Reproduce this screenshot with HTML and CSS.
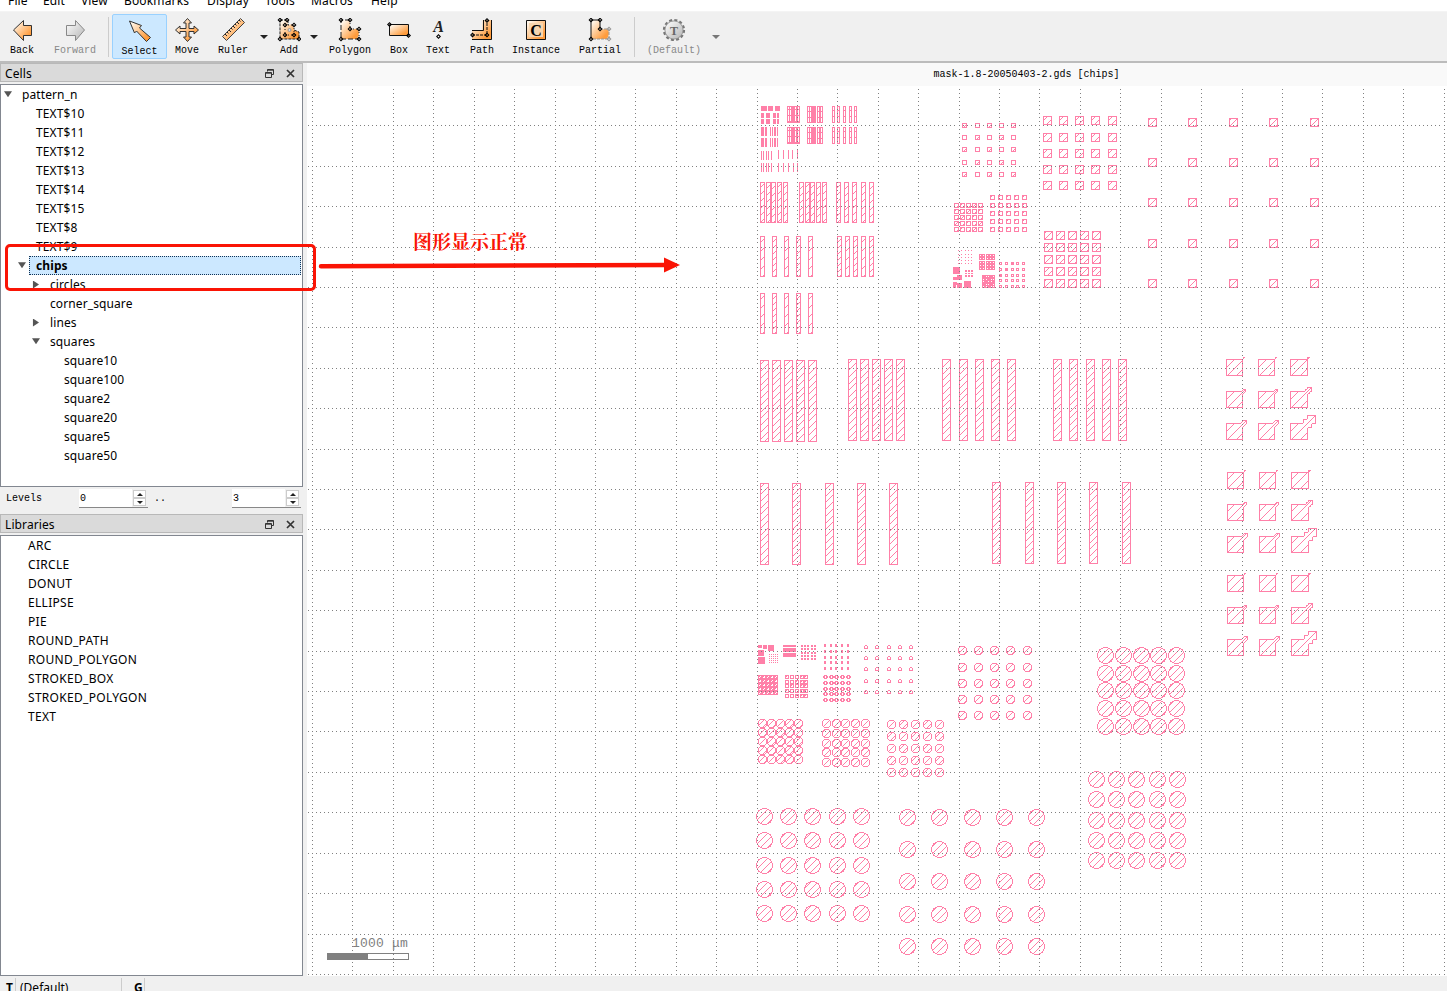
FILE: index.html
```
<!DOCTYPE html>
<html lang="en">
<head>
<meta charset="utf-8">
<title>mask-1.8-20050403-2.gds [chips]</title>
<link rel="stylesheet" href="styles.css">
</head>
<body>
<svg width="0" height="0" class="defs">
  <defs>
    <linearGradient id="og" x1="0" y1="0" x2="1" y2="1"><stop offset=".1" stop-color="#fff6ea"/><stop offset=".8" stop-color="#ff9c3c"/></linearGradient>
    <linearGradient id="gg" x1="0" y1="0" x2="1" y2="1"><stop offset="0" stop-color="#fff"/><stop offset="1" stop-color="#b4b4b4"/></linearGradient>
    <path id="nd" d="M0-2.5 2.5 0 0 2.5-2.5 0z M0-1-1 0 0 1 1 0z" fill-rule="evenodd"/>
    <symbol id="float" viewBox="0 0 9 9"><path d="M2.5 2.5V.5h6v5h-2M.5 3.5h6v5h-6zM.5 4.2h6M2.5 1.2h6" fill="none" stroke="#333"/></symbol>
    <symbol id="close" viewBox="0 0 9 9"><path d="M1 1l7 7M8 1L1 8" fill="none" stroke="#333" stroke-width="1.7"/></symbol>
  </defs>
</svg>
<nav class="menu"><span class="m1">File</span><span class="m2">Edit</span><span class="m3">View</span><span class="m4">Bookmarks</span><span class="m5">Display</span><span class="m6">Tools</span><span class="m7">Macros</span><span>Help</span></nav>
<div class="toolbar">
  <div class="tool w44"><svg viewBox="0 0 24 24"><path d="M3.500 12 13.500 2.500v5h8v10h-8v5z" fill="url(#og)" stroke="#333"/></svg>Back</div>
  <div class="tool w62 off"><svg viewBox="0 0 24 24"><path d="M21.500 12 12.500 2.500v5h-9v10h9v5z" fill="url(#gg)" stroke="#888"/></svg>Forward</div>
  <div class="sep"></div>
  <div class="tool w55 on"><svg viewBox="0 0 24 24"><path d="M1.500 2 13.500 6.500 11.500 9 22.500 18.500 18.500 22.500 8.500 12 6.500 14z" fill="url(#og)" stroke="#333"/></svg>Select</div>
  <div class="tool w40"><svg viewBox="0 0 24 24"><path d="M12.500 .5l4 4.500h-2.500V10.500H19V8l4.500 4-4.500 4v-2.500h-5V19h2.500l-4 4.500L8.500 19h2.500v-5.500H5V16L.5 12 5 8v2.500h6V5H8.500z" fill="url(#og)" stroke="#333"/></svg>Move</div>
  <div class="tool w52"><svg viewBox="0 0 24 24"><path d="M19.500 .5l4 4-18 18-4-4z" fill="url(#og)" stroke="#444"/><path d="M4 16l2 2m0-4 1.500 1.500M8 12l2 2m0-4 1.500 1.500M12 8l2 2m0-4 1.500 1.500M16 4l2 2m0-4 1.500 1.500" stroke="#222"/></svg>Ruler</div>
  <div class="drop w10"></div>
  <div class="tool w40"><svg viewBox="0 0 24 24"><path d="M3 2h8v5l5-1 1 6 5 2v7H3z" fill="url(#og)"/><path d="M3 2h8v5M17 12l5 2v7H3V2" fill="none" stroke="#222" stroke-dasharray="3 1"/><path d="M8 7h9v10H8z" fill="none" stroke="#222" stroke-dasharray="1 2"/><use href="#nd" x="3" y="2"/><use href="#nd" x="10" y="2"/><use href="#nd" x="3" y="21"/><use href="#nd" x="22" y="21"/><use href="#nd" x="8" y="7"/><use href="#nd" x="17" y="7"/><use href="#nd" x="8" y="17"/><use href="#nd" x="17" y="17"/><circle cx="12.500" cy="12" r="1.500" fill="#ddd" stroke="#999"/></svg>Add</div>
  <div class="drop w9"></div>
  <div class="tool w64"><svg viewBox="0 0 24 24"><path d="M3 2h9v9c2 2 4-1 7 0 3 3 2 6 0 10H3z" fill="url(#og)"/><path d="M12 2H3v19h18" fill="none" stroke="#222" stroke-dasharray="5 2"/><path d="M12 2v9h9v10" fill="none" stroke="#222" stroke-dasharray="1 2"/><use href="#nd" x="3" y="2"/><use href="#nd" x="12" y="2"/><use href="#nd" x="12" y="11"/><use href="#nd" x="21" y="11"/><use href="#nd" x="3" y="21"/><use href="#nd" x="21" y="21"/></svg>Polygon</div>
  <div class="tool w34"><svg viewBox="0 0 24 24"><path d="M2.500 6.500h19v11h-19z" fill="url(#og)" stroke="#111"/><use href="#nd" x="2.500" y="6.500"/><use href="#nd" x="21.500" y="17.500"/></svg>Box</div>
  <div class="tool w44"><svg viewBox="0 0 24 24"><text x="12.500" y="13.500" class="ia">A</text><use href="#nd" x="12.500" y="18.500"/></svg>Text</div>
  <div class="tool w44"><svg viewBox="0 0 24 24"><path d="M12.500 2v11H2v8.500h19.500V2z" fill="url(#og)"/><path d="M13.500 2v10.500H2M2 21.500h19.500V2" fill="none" stroke="#111"/><path d="M2 17h15V2" fill="none" stroke="#111" stroke-dasharray="3 1"/><use href="#nd" x="2.500" y="17"/><use href="#nd" x="17" y="17"/><use href="#nd" x="17" y="2.500"/></svg>Path</div>
  <div class="tool w64"><svg viewBox="0 0 24 24"><path d="M2.500 2.500h19v19h-19z" fill="url(#og)" stroke="#111"/><path d="M5 5h14v14H5z" fill="#f7d5ae"/><text x="12" y="17.500" class="ic">C</text></svg>Instance</div>
  <div class="tool w64"><svg viewBox="0 0 24 24"><path d="M3 2h9v9c2 2 4-1 7 0 3 3 2 6 0 10H3z" fill="url(#og)"/><path d="M12 11V2H3v19" fill="none" stroke="#111"/><path d="M12 11h9v10H3" fill="none" stroke="#999" stroke-dasharray="3 1"/><use href="#nd" x="3" y="2"/><use href="#nd" x="12" y="2"/><use href="#nd" x="12" y="11"/><use href="#nd" x="3" y="21"/><g fill="#999"><use href="#nd" x="21" y="11"/><use href="#nd" x="21" y="21"/></g></svg>Partial</div>
  <div class="sep"></div>
  <div class="tool w72 off"><svg viewBox="0 0 24 24"><circle cx="12" cy="12" r="10" fill="#ddd" stroke="#777" stroke-width="2.200" stroke-dasharray="3 2.240"/><circle cx="12" cy="12" r="9" fill="url(#gg)" stroke="#888" stroke-width=".7"/><text x="12" y="16.500" class="it">T</text></svg>(Default)</div>
  <div class="drop w12 gray"></div>
</div>
<main class="main">
  <aside class="side">
    <div class="dock">Cells<span class="grow"></span><svg class="fl"><use href="#float"/></svg><svg class="cl"><use href="#close"/></svg></div>
    <div class="list cells">
      <div class="row l0"><i class="open"></i>pattern_n</div>
      <div class="row l1"><i></i>TEXT$10</div><div class="row l1"><i></i>TEXT$11</div><div class="row l1"><i></i>TEXT$12</div><div class="row l1"><i></i>TEXT$13</div><div class="row l1"><i></i>TEXT$14</div><div class="row l1"><i></i>TEXT$15</div><div class="row l1"><i></i>TEXT$8</div><div class="row l1"><i></i>TEXT$9</div>
      <div class="row l1"><i class="open"></i><b class="sel">chips</b></div>
      <div class="row l2"><i class="shut"></i>circles</div><div class="row l2"><i></i>corner_square</div><div class="row l2"><i class="shut"></i>lines</div><div class="row l2"><i class="open"></i>squares</div>
      <div class="row l3"><i></i>square10</div><div class="row l3"><i></i>square100</div><div class="row l3"><i></i>square2</div><div class="row l3"><i></i>square20</div><div class="row l3"><i></i>square5</div><div class="row l3"><i></i>square50</div>
    </div>
    <div class="levels"><span class="lv">Levels</span><span class="spin">0<span class="btns"><i></i><i class="dn"></i></span></span><span class="dots">..</span><span class="spin">3<span class="btns"><i></i><i class="dn"></i></span></span></div>
    <div class="dock">Libraries<span class="grow"></span><svg class="fl"><use href="#float"/></svg><svg class="cl"><use href="#close"/></svg></div>
    <div class="list libs"><div>ARC</div><div>CIRCLE</div><div>DONUT</div><div>ELLIPSE</div><div>PIE</div><div>ROUND_PATH</div><div>ROUND_POLYGON</div><div>STROKED_BOX</div><div>STROKED_POLYGON</div><div>TEXT</div></div>
  </aside>
  <section class="view">
    <div class="title">mask-1.8-20050403-2.gds [chips]</div>
    <svg class="plot" width="1140" height="890" viewBox="307 86 1140 890" shape-rendering="crispEdges">
      <path id="shapes" fill="#ff80a8"/>
      <path id="grid" fill="#808080"/>
      <path d="M327 953h82v7h-82zM368 954v5h40v-5z" fill="#808080" fill-rule="evenodd"/>
      <text x="352" y="947" class="scale">1000 μm</text>
    </svg>
  </section>
</main>
<footer class="status"><b class="t">T</b><span class="d">(Default)</span><b class="g">G</b></footer>
<svg class="note" width="690" height="70" viewBox="0 226 690 70">
  <rect x="6.500" y="245.500" width="308" height="44" rx="3.500" fill="none" stroke="#fa1405" stroke-width="3"/>
  <path d="M321 266.300 666 265" stroke="#fa1405" stroke-width="4.500" stroke-linecap="round"/>
  <path d="M664 257.500 680 265 664 272.500z" fill="#fa1405"/>
  <text x="413" y="248.500" class="cn">图形显示正常</text>
</svg>
<script src="layout.js"></script>
</body>
</html>
```
FILE: styles.css
```
* { box-sizing: border-box; }
body { margin: 0; width: 1447px; height: 991px; overflow: hidden; position: relative; background: #f0f0f0; color: #000; font: 12px/19px "Noto Sans", "Open Sans", sans-serif; display: flex; flex-direction: column; }
.defs { position: absolute; }
.menu { height: 12px; background: #fff; overflow: hidden; display: flex; padding-left: 8px; align-items: flex-end; border-bottom: 1px solid #f4f4f4; flex: none; }
.menu span { height: 20px; line-height: 20px; white-space: nowrap; font-size: 12px; flex: none; letter-spacing: .15px; }
.m1 { width: 35px; } .m2 { width: 38px; } .m3 { width: 43px; } .m4 { width: 83px; } .m5 { width: 58px; } .m6 { width: 46px; } .m7 { width: 60px; }
.toolbar { height: 51px; flex: none; display: flex; padding-top: 2px; border-bottom: 2px solid #bcbcbc; background: #f0f0f0; font: 10px/12px "Liberation Mono", monospace; }
.tool { height: 45px; padding-top: 3px; display: flex; flex-direction: column; align-items: center; white-space: nowrap; gap: 3px; border: 1px solid transparent; }
.tool svg { width: 24px; height: 24px; flex: none; }
.on { background: #cce8ff; border-color: #99d1ff; border-radius: 2px; padding-top: 4px; }
.off { color: #888; }
.w44 { width: 44px; } .w62 { width: 62px; } .w55 { width: 55px; } .w40 { width: 40px; } .w52 { width: 52px; } .w64 { width: 64px; } .w34 { width: 34px; } .w72 { width: 72px; } .w10 { width: 10px; } .w9 { width: 9px; } .w12 { width: 12px; }
.sep { width: 6px; height: 40px; margin-top: 3px; background: linear-gradient(90deg, transparent 2px, #ccc 2px, #ccc 3px, transparent 3px); }
.drop::before { content: ""; display: block; margin: 21px auto 0; width: 0; border: 4px solid transparent; border-top-color: #222; border-bottom: 0; }
.gray::before { border-top-color: #777; }
.ia { font: italic bold 16px "Liberation Serif", serif; text-anchor: middle; fill: #222; }
.ic { font: bold 16px "Liberation Serif", serif; text-anchor: middle; }
.it { font: bold 12px "Liberation Serif", serif; text-anchor: middle; fill: #666; }
.main { flex: none; height: 913px; display: flex; }
.side { width: 307px; padding-right: 4px; display: flex; flex-direction: column; }
.dock { height: 19px; flex: none; display: flex; align-items: center; background: #dadada; border: 1px solid #b8b8b8; padding: 1px 7px 0 4px; line-height: 17px; letter-spacing: .1px; }
.grow { flex: 1; }
.fl, .cl { width: 9px; height: 9px; }
.cl { margin-left: 12px; }
.list { background: #fff; border: 1px solid #828790; flex: none; letter-spacing: .1px; }
.cells { height: 403px; margin-top: 2px; }
.row { height: 19px; display: flex; align-items: center; }
.row i { width: 8px; margin-right: 10px; margin-left: 3px; height: 8px; }
.l1 { padding-left: 14px; } .l2 { padding-left: 28px; } .l3 { padding-left: 42px; }
.row .open { background: #555; clip-path: polygon(0 10%, 100% 10%, 50% 85%); }
.row .shut { background: #555; clip-path: polygon(12% 0, 88% 50%, 12% 100%); }
.sel { flex: 1; height: 19px; line-height: 17px; background: #cce8ff; border: 1px dotted #135; margin-left: -7px; padding-left: 6px; margin-right: 1px; }
.levels { height: 27px; flex: none; display: flex; align-items: flex-start; padding: 2px 0 0 6px; font: 10px/20px "Liberation Mono", monospace; }
.lv { width: 73px; }
.spin { width: 69px; height: 19px; background: #fff; border-bottom: 1px solid #888; display: flex; justify-content: space-between; padding-left: 1px; }
.btns { width: 16px; background: #f0f0f0; display: flex; flex-direction: column; gap: 0; padding: 1px 2px 1px 1px; }
.btns i { height: 8px; background: #fff; border: 1px solid #ccc; display: flex; justify-content: center; align-items: center; }
.btns i::before { content: ""; border: 3px solid transparent; border-top: 0; border-bottom-color: #222; }
.btns .dn::before { transform: rotate(180deg); }
.dots { width: 84px; padding-left: 6px; }
.libs { margin-top: 2px; height: 441px; padding-left: 27px; letter-spacing: .3px; }
.view { width: 1140px; }
.title { height: 23px; background: #f9f9f9; text-align: center; font: 10px/24px "Liberation Mono", monospace; padding-left: 299px; }
.plot { display: block; background: #fff; }
.scale { font: 13px "Liberation Mono", monospace; fill: #808080; letter-spacing: .2px; }
.status { height: 15px; flex: none; display: flex; overflow: hidden; padding: 2px 0 0 6px; }
.status .t { width: 10px; border-right: 1px solid #ccc; }
.status .d { padding-left: 4px; width: 106px; border-right: 1px solid #ccc; }
.status .g { padding-left: 12px; width: 23px; border-right: 1px solid #ccc; }
.note { position: absolute; left: 0; top: 226px; pointer-events: none; }
.cn { font: bold 19px "Noto Serif CJK SC", "Noto Sans CJK SC", serif; fill: #fa1405; }
```
FILE: layout.js
```
const XS = [312,352,393,433,474,514,555,595,635,676,716,757,797,837,878,918,959,999,1039,1080,1120,1161,1201,1242,1282,1322,1363,1403,1444];
const YS = [85,125,166,206,247,287,327,368,408,449,489,529,570,610,651,691,731,772,812,853,893,934,974];
const STEP = 4.042;
const pix = new Set();
const put = (x, y) => pix.add(x + "," + y);
const fill = (x, y, w, h = w) => { for (let i = 0; i < w; i++) for (let j = 0; j < h; j++) put(x + i, y + j); };
const hole = (x, y, w = 1, h = w) => { for (let i = 0; i < w; i++) for (let j = 0; j < h; j++) pix.delete((x + i) + "," + (y + j)); };
const each = (xs, ys, fn) => ys.forEach((y, j) => xs.forEach((x, i) => fn(x, y, i, j)));

// Outlined, diagonally hatched union of rectangles.
function union(rects, p, phase) {
  const [ox, oy] = rects[0];
  const inside = (x, y) => rects.some(r => x >= r[0] && x < r[0] + r[2] && y >= r[1] && y < r[1] + r[3]);
  for (const [x0, y0, w, h] of rects)
    for (let y = y0; y < y0 + h; y++)
      for (let x = x0; x < x0 + w; x++) {
        const edge = !inside(x - 1, y) || !inside(x + 1, y) || !inside(x, y - 1) || !inside(x, y + 1);
        const m = (((x - ox + y - oy - phase) % p) + p) % p;
        if (edge || m < 1) put(x, y);
      }
}
const box = (x, y, w, h, p = 99, phase = 98) => union([[x, y, w, h]], p, phase);

function circle(x0, y0, d, p, phase) {
  const c = (d - 1) / 2, r = d / 2;
  const inside = (x, y) => Math.hypot(x - c, y - c) < r;
  for (let y = 0; y < d; y++) for (let x = 0; x < d; x++) {
    if (!inside(x, y)) continue;
    const edge = !inside(x - 1, y) || !inside(x + 1, y) || !inside(x, y - 1) || !inside(x, y + 1);
    if (edge || (((x + y - phase) % p) + p) % p < 1) put(x0 + x, y0 + y);
  }
}

// Fine lines
[[761,6],[768,5],[775,5]].forEach(a => fill(a[0], 106, a[1], 5));
[113,119].forEach(y => [[761,3],[766,4],[773,3],[777,2]].forEach(a => fill(a[0], y, a[1], 5)));
[127,138].forEach(y => [[761,3],[765,2],[770,1],[772,1],[774,2],[777,1]].forEach(a => fill(a[0], y, a[1], 9)));
[151,163].forEach(y => [761,763,766,768,771].forEach(x => fill(x, y, 1, 9)));
[778,783,788,792,797].forEach(x => fill(x, 150, 1, 9));
[778,783,788,793,797].forEach(x => fill(x, 163, 1, 9));
[106,127].forEach(y => {
  [787,789,791,794,797].forEach(x => box(x, y, 3, 17, 6, 4));
  fill(792, y, 1, 17);
  [807,809,812,817,820].forEach(x => box(x, y, 3, 17, 6, 6));
  fill(811, y, 1, 17); box(813, y, 3, 17, 6, 4);
  [832,837,843,849,854].forEach(x => box(x, y, 3, 17, 6, 5));
});
[760,766,771,777,783,799,805,810,816,822,836,844,852,861,869].forEach((x, i) => box(x, 182, 5, 41, 7, 5 + i % 3));
[770,809].forEach(x => fill(x, 182, 1, 41));
[760,772,784,796,808,837,845,853,861,869].forEach((x, i) => box(x, 236, 5, 41, i % 2 ? 6 : 9, 6));
[760,772,784,796,808].forEach((x, i) => box(x, 293, 5, 41, i % 2 ? 6 : 9, 6));
const bars = (xs, y) => xs.forEach((x, i) => box(x, y, 9, 82, 6.75, 4 + i * .7));
bars([760,772,784,796,808], 360);
bars([848,860,872,884,896,942,959,975,991,1007,1053,1069,1086,1102,1118], 359);
bars([760,792,825,857,889], 483);
bars([992,1025,1057,1089,1122], 482);

// Squares
each([962,975,987,999,1011], [123,135,147,160,172], (x, y, i, j) => box(x, y, 5, 5, 99, (i + j) % 2 ? 98 : 5));
each([1043,1059,1075,1091,1108], [116,133,149,165,181], (x, y) => box(x, y, 9, 9, 7, 4));
each([1148,1188,1229,1269,1310], [118,158,198,239,279], (x, y) => box(x, y, 9, 9, 6, 8));
each([990,998,1006,1014,1022], [195,203,211,219,227], (x, y) => box(x, y, 5, 5, 99, 2));
each([954,960,966,972,978], [203,209,215,221,227], (x, y, i, j) => box(x, y, 5, 5, 99, (i + j) % 4 === 3 ? 4 : (i + j) % 2 ? 2 : 6));
each([1044,1056,1068,1080,1092], [231,243,255,267,279], (x, y, i, j) => box(x, y, 9, 9, 6, (i + j) % 2 ? 5 : 8));
each([999,1005,1011,1016,1022], [262,268,274,279,285], (x, y) => box(x, y, 3, 3));
[[1011,262],[1005,268],[999,274]].forEach(a => fill(a[0], a[1], 3));
each([958,961,965,968,971], [250,254,257,260,263], (x, y) => put(x, y));
[[953,267,7,7],[957,275,5,5],[953,277,4,3],[953,282,4,6],[957,283,5,5],[964,281,7,7],[979,254,6,6],[986,254,9,6],[979,261,6,9],[986,261,9,9],[982,275,13,13]].forEach(a => fill(...a));
hole(956, 285, 1, 3);
each([965,968,971], [270,275], (x, y) => fill(x, y, 2)); [965,968,971].forEach(x => fill(x, 273, 2, 1));
each([980,983,987,990,993], [255,258,262,265,268], (x, y) => hole(x, y));
each([983,986,988,991,993], [276,279,281,284,286], (x, y, i, j) => (i + j) % 3 && hole(x, y));

// Corner squares with diagonal tails
[[1226,359],[1227,472],[1227,575]].forEach(([gx, gy], g) => {
  each([gx, gx + 32, gx + 64], [gy, gy + 32, gy + 64], (x, y, i, j) => {
    const w = i === 2 ? 18 : 17;
    const parts = [[x, y, w, 17]];
    if (j === 1 && i === 2) parts.push([x + 15, y - 2, 5, 5], [x + 17, y - 4, 5, 5]);
    if (j === 2 && i === 2) parts.push([x + 13, y - 4, 9, 9], [x + 17, y - 8, 9, 9]);
    if (j === 1 && i < 2) for (let k = 0; k < 3; k++) parts.push([x + 15 + k, y - k, 3, 3]);
    if (j === 2 && i < 2) for (let k = 0; k < 4; k++) parts.push([x + 14 + k, y - k, 4, 4]);
    union(parts, 9, 8 - g % 2);
    if (j === 0) { put(x + w, y - 1); put(x + w + 1, y - 2); put(x + w, y - 2); if (i === 2) { put(x + w - 1, y - 1); put(x + w - 1, y - 2); } }
  });
});

// Circle arrays
[[758,645,4,3],[763,645,4,4],[768,645,6,6],[758,650,6,6],[758,657,7,7],[783,645,13,2],[783,648,13,4],[783,653,13,4],[758,675,20,20]].forEach(a => fill(...a));
each([769,771,773,775,777], [654,656,658,660,662], (x, y) => put(x, y));
each([801,804,807,811,814], [645,648,652,655,658], (x, y) => fill(x, y, 2));
each([824,830,835,841,847], [644,650,656,661,667], (x, y) => fill(x, y, 2, 3));
each([760,764,768,772,776], [676,680,684,688,692], (x, y, i, j) => { hole(x, y, 1); hole(x - 1, y + 1, 1 + (i + j) % 2, 1); });
each([785,790,795,800,804], [675,680,684,689,694], (x, y, i, j) => { box(x, y, 4, 4); if (i > 2 || !((i + j) % 3)) put(x + 1, y + 1); });
each([823,829,834,840,846], [675,681,687,692,698], (x, y) => { fill(x, y, 5, 4); [[0,0],[4,0],[0,3],[4,3],[2,1],[2,2]].forEach(a => hole(x + a[0], y + a[1])); });
each([864,875,887,898,909], [645,656,667,679,690], (x, y) => { box(x, y, 4, 4); hole(x, y); hole(x + 3, y); });
each([958,974,990,1006,1023], [646,663,679,695,711], (x, y) => circle(x, y, 9, 6, 7));
each([758,767,776,785,794], [719,728,737,746,755], (x, y, i, j) => circle(x, y, 9, 6, 6 + (i + j) % 3));
each([822,832,841,851,861], [719,729,739,748,758], (x, y, i, j) => circle(x, y, 9, 6, 8 + (i + j) % 2));
each([887,899,911,923,935], [720,732,744,756,768], (x, y, i, j) => circle(x, y, 9, 6, 8 + (i + j) % 2 * 3));
each([756,780,804,829,853], [808,832,857,881,905], (x, y, i) => circle(x, y, 17, 7, 5 + i % 3));
each([899,931,964,996,1028], [809,841,873,906,938], (x, y, i) => circle(x, y, 17, 7, 5 + i % 3));
each([1097,1115,1133,1150,1168], [647,665,682,700,718], (x, y, i) => circle(x, y, 17, 7, 5 + i % 3));
each([1088,1108,1128,1149,1169], [771,791,812,832,852], (x, y, i) => circle(x, y, 17, 7, 5 + i % 3));

const cell = s => { const [x, y] = s.split(","); return `M${x} ${y}h1v1h-1z`; };
document.getElementById("shapes").setAttribute("d", [...pix].map(cell).join(""));

const dots = new Set();
for (const y of YS.slice(1)) for (const x of [272, ...XS]) for (let k = 0; k < 10; k++) dots.add(Math.floor(x + k * STEP) + "," + y);
for (const x of XS) for (const y of YS) for (let k = 0; k < 10; k++) dots.add(x + "," + Math.floor(y + k * STEP));
document.getElementById("grid").setAttribute("d", [...dots].map(cell).join(""));
```
